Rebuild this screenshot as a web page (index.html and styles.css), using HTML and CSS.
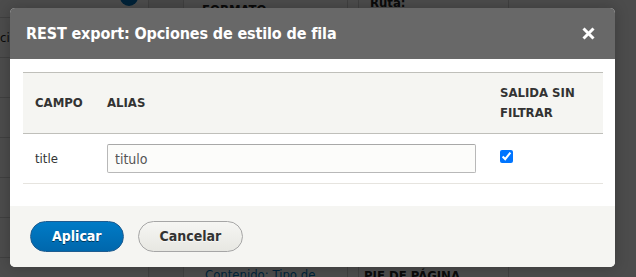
FILE: index.html
```html
<!DOCTYPE html>
<html lang="es">
<head>
<meta charset="utf-8">
<title>REST export: Opciones de estilo de fila</title>
<link rel="stylesheet" href="styles.css">
</head>
<body>
<div class="page">
  <div class="col col-a">
    <div class="a-row a-top"><span class="circle"></span></div>
    <div class="a-row"><span class="cut">ción</span></div>
    <div class="a-row"></div>
    <div class="a-row"></div>
    <div class="a-row"></div>
    <div class="a-row"></div>
    <div class="a-row"></div>
  </div>
  <div class="col col-b"></div>
  <div class="col col-c">
    <div class="c-top">FORMATO</div>
    <div class="c-bottom"><a class="link" href="#">Contenido: Tipo de</a></div>
  </div>
  <div class="col col-d"></div>
  <div class="col col-e">
    <div class="e-top">Ruta:</div>
    <div class="e-bottom">PIE DE PÁGINA</div>
  </div>
  <div class="col col-f"></div>
</div>
<div class="overlay"></div>
<div class="dialog" role="dialog">
  <div class="titlebar">
    <h1 class="title">REST export: Opciones de estilo de fila</h1>
    <span class="close" aria-label="Cerrar">
      <svg width="13" height="13" viewBox="0 0 13 13"><path d="M1.5 1.5 L11.5 11.5 M11.5 1.5 L1.5 11.5" stroke="#fff" stroke-width="3" fill="none"/></svg>
    </span>
  </div>
  <div class="content">
    <table class="grid">
      <colgroup>
        <col class="c1">
        <col class="c2">
        <col class="c3">
      </colgroup>
      <thead>
        <tr>
          <th>Campo</th>
          <th>Alias</th>
          <th>Salida sin filtrar</th>
        </tr>
      </thead>
      <tbody>
        <tr>
          <td>title</td>
          <td><input class="text" type="text" value="titulo"></td>
          <td class="chk"><input class="cb" type="checkbox" checked></td>
        </tr>
      </tbody>
    </table>
  </div>
  <div class="footer">
    <button class="btn primary" type="button">Aplicar</button>
    <button class="btn" type="button">Cancelar</button>
  </div>
</div>
</body>
</html>
```
FILE: styles.css
```css
html, body {
  margin: 0;
  padding: 0;
  width: 636px;
  height: 277px;
  overflow: hidden;
  background: #fff;
  font-family: "DejaVu Sans Condensed", "DejaVu Sans", sans-serif;
  font-stretch: condensed;
}

.page {
  display: flex;
  height: 277px;
  color: #222;
  font-size: 13px;
  line-height: 16px;
}

.col {
  box-sizing: border-box;
  height: 277px;
  border-right: 1px solid #d5d5d5;
}

.col-a { width: 149px; }
.col-b { width: 35px; background: #f2f2f2; }
.col-c { width: 164px; display: flex; flex-direction: column; }
.col-d { width: 11px; }
.col-e { width: 150px; display: flex; flex-direction: column; }
.col-f { flex: 1; border-right: 0; }

.a-row {
  box-sizing: border-box;
  height: 40px;
  border-bottom: 1px solid #d5d5d5;
  display: flex;
  align-items: center;
}

.a-top {
  height: 18px;
  justify-content: flex-end;
  align-items: flex-start;
  padding-right: 10px;
}

.circle {
  width: 18px;
  height: 18px;
  border-radius: 50%;
  background: #0074bd;
  margin-top: -12px;
}

.cut { margin-left: 0; }

.c-top {
  padding-left: 18px;
  margin-top: 2px;
  font-weight: bold;
}

.c-bottom {
  margin-top: auto;
  margin-bottom: -6px;
  padding-left: 21px;
}

.link { color: #0074bd; text-decoration: none; }

.e-top {
  padding-left: 11px;
  margin-top: -5px;
  font-weight: bold;
}

.e-bottom {
  margin-top: auto;
  margin-bottom: -7px;
  padding-left: 5px;
  font-weight: bold;
}

.overlay {
  position: absolute;
  left: 0;
  top: 0;
  right: 0;
  bottom: 0;
  background: rgba(0, 0, 0, 0.7);
}

.dialog {
  position: absolute;
  left: 10px;
  top: 8px;
  width: 605px;
  background: #fff;
  border-radius: 5px;
  overflow: hidden;
  box-shadow: 0 0 14px 1px rgba(0, 0, 0, 0.2);
  color: #333;
}

.titlebar {
  box-sizing: border-box;
  height: 51px;
  background: #686868;
  display: flex;
  align-items: center;
  justify-content: space-between;
  padding: 0 20px 0 16px;
}

.title {
  margin: 0;
  color: #fff;
  font-size: 16px;
  font-weight: bold;
  line-height: 20px;
  letter-spacing: -0.13px;
}

.close {
  display: block;
  width: 13px;
  height: 13px;
}

.close svg { display: block; }

.content {
  padding: 13px 12px 22px 13px;
}

.grid {
  width: 580px;
  border-collapse: collapse;
  table-layout: fixed;
}

.c1 { width: 72px; }
.c2 { width: 393px; }
.c3 { width: 115px; }

.grid th {
  background: #f5f5f2;
  border-top: 1px solid #bfbfba;
  border-bottom: 1px solid #bfbfba;
  text-align: left;
  padding: 10px 12px;
  font-size: 13px;
  line-height: 20px;
  font-weight: bold;
  text-transform: uppercase;
  color: #333;
  vertical-align: middle;
}

.grid td {
  padding: 10px 12px;
  border-bottom: 1px solid #e6e4df;
  font-size: 13px;
  line-height: 18px;
  color: #333;
  vertical-align: middle;
}

.grid td.chk {
  vertical-align: top;
  padding-top: 16px;
}

.text {
  display: block;
  box-sizing: border-box;
  width: 100%;
  height: 29px;
  margin: 0;
  border: 1px solid #b8b8b8;
  border-top-color: #a8a8a8;
  border-radius: 2px;
  background: #fcfcfa;
  padding: 0 7px;
  font-family: "DejaVu Sans Condensed", "DejaVu Sans", sans-serif;
  font-stretch: condensed;
  font-size: 14px;
  color: #555;
}

.cb {
  display: block;
  margin: 0;
  width: 13px;
  height: 13px;
}

.footer {
  background: #f5f5f2;
  padding: 15px 20px;
  display: flex;
  gap: 14px;
}

.btn {
  box-sizing: border-box;
  height: 31px;
  margin: 0;
  padding: 0 21px;
  border: 1px solid #a6a6a6;
  border-radius: 20px;
  background: linear-gradient(to bottom, #f6f6f3, #e7e7e2);
  font-family: "DejaVu Sans Condensed", "DejaVu Sans", sans-serif;
  font-stretch: condensed;
  font-size: 14px;
  font-weight: bold;
  line-height: 29px;
  color: #333;
  text-shadow: 0 1px rgba(255, 255, 255, 0.6);
}

.btn.primary {
  border-color: #1e5c90;
  background: linear-gradient(to bottom, #007bc6, #0067ac);
  color: #fff;
  text-shadow: 0 1px rgba(0, 0, 0, 0.5);
}
```
